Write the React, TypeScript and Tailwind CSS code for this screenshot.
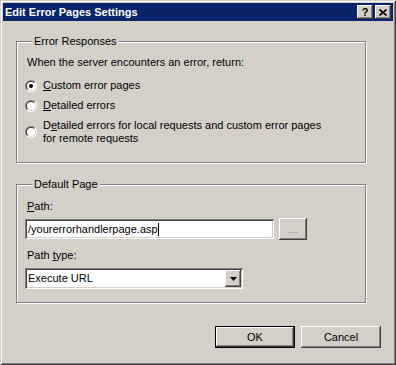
import React from 'react';

const raised =
  'shadow-[inset_-1px_-1px_0_#404040,inset_1px_1px_0_#ffffff,inset_-2px_-2px_0_#808080,inset_2px_2px_0_#d4d0c8]';
const sunken =
  'shadow-[inset_1px_1px_0_#808080,inset_-1px_-1px_0_#ffffff,inset_2px_2px_0_#404040,inset_-2px_-2px_0_#d4d0c8]';
const etched = 'border border-[#808080] shadow-[inset_1px_1px_0_#ffffff,1px_1px_0_#ffffff]';

function Radio({ checked }: { checked?: boolean }) {
  // classic sunken radio: gray/dark top-left, white/light bottom-right
  const half = (r: number) => {
    const d = r * Math.SQRT1_2;
    return `M${6 - d},${6 + d} A${r},${r} 0 0 1 ${6 + d},${6 - d} Z`;
  };
  const other = (r: number) => {
    const d = r * Math.SQRT1_2;
    return `M${6 - d},${6 + d} A${r},${r} 0 0 0 ${6 + d},${6 - d} Z`;
  };
  return (
    <svg width="12" height="12" viewBox="0 0 12 12" className="shrink-0">
      <path d={half(6)} fill="#808080" />
      <path d={other(6)} fill="#ffffff" />
      <path d={half(5)} fill="#404040" />
      <path d={other(5)} fill="#d4d0c8" />
      <circle cx="6" cy="6" r="4" fill="#ffffff" />
      {checked && <circle cx="6" cy="6" r="2" fill="#000000" />}
    </svg>
  );
}

function GroupBox({ title, children, className }: { title: string; children: React.ReactNode; className?: string }) {
  return (
    <fieldset className={`${etched} w-[350px] ml-[13px] pl-[8px] ${className ?? ''}`}>
      <legend className="ml-[7px] px-[2px] leading-[13px] bg-[#d4d0c8]">{title}</legend>
      {children}
    </fieldset>
  );
}

function Button({ label, primary }: { label: string; primary?: boolean }) {
  return (
    <div className={`w-[80px] h-[22px] ${primary ? 'border border-black' : ''}`}>
      <div className={`w-full h-full flex items-center justify-center ${raised}`}>{label}</div>
    </div>
  );
}

export default function App() {
  return (
    <div className="w-[396px] h-[365px] bg-[#d4d0c8] p-[3px] flex flex-col text-[11px] leading-[13px] text-black font-['Liberation_Sans',Arial,sans-serif] shadow-[inset_1px_1px_0_#d4d0c8,inset_-1px_-1px_0_#404040,inset_2px_2px_0_#ffffff,inset_-2px_-2px_0_#808080]">
      {/* Title bar */}
      <div className="h-[18px] bg-[#0a246a] flex items-center pl-[2px] pr-[2px]">
        <span className="text-white font-bold flex-1">Edit Error Pages Settings</span>
        <div
          className={`w-[16px] h-[14px] bg-[#d4d0c8] flex items-center justify-center font-bold text-[11px] leading-none text-black ${raised}`}
        >
          ?
        </div>
        <div className={`w-[16px] h-[14px] ml-[2px] bg-[#d4d0c8] flex items-center justify-center ${raised}`}>
          <svg width="8" height="7" viewBox="0 0 8 7">
            <path d="M0.5 0.5 L7.5 6.5 M7.5 0.5 L0.5 6.5" stroke="#000" strokeWidth="1.6" />
          </svg>
        </div>
      </div>

      <GroupBox title="Error Responses" className="mt-[14px] pt-[8px] pb-[17px]">
        <div className="ml-[2px]">When the server encounters an error, return:</div>
        <div className="mt-[10px] flex items-center gap-[6px]">
          <Radio checked />
          <span>
            <u>C</u>ustom error pages
          </span>
        </div>
        <div className="mt-[7px] flex items-center gap-[6px]">
          <Radio />
          <span>
            <u>D</u>etailed errors
          </span>
        </div>
        <div className="mt-[7px] flex items-center gap-[6px]">
          <Radio />
          <span>
            D<u>e</u>tailed errors for local requests and custom error pages
            <br />
            for remote requests
          </span>
        </div>
      </GroupBox>

      <GroupBox title="Default Page" className="mt-[15px] pt-[9px] pb-[13px]">
        <div className="ml-[2px]">
          <u>P</u>ath:
        </div>
        <div className="mt-[5px] h-[22px] flex items-center">
          <div className={`w-[249px] h-[20px] bg-white flex items-center pl-[3px] ${sunken}`}>
            <span>/yourerrorhandlerpage.asp</span>
            <span className="w-px h-[13px] bg-black" />
          </div>
          <div className={`ml-[5px] w-[28px] h-[22px] flex items-center justify-center text-[#808080] ${raised}`}>
            ...
          </div>
        </div>
        <div className="mt-[9px] ml-[2px]">
          Path <u>t</u>ype:
        </div>
        <div className={`mt-[6px] w-[218px] h-[21px] bg-white flex items-center p-[2px] ${sunken}`}>
          <span className="flex-1 pl-[1px]">Execute URL</span>
          <div className={`w-[16px] h-[17px] bg-[#d4d0c8] flex items-center justify-center ${raised}`}>
            <svg width="7" height="4" viewBox="0 0 7 4">
              <polygon points="0,0 7,0 3.5,4" fill="#000" />
            </svg>
          </div>
        </div>
      </GroupBox>

      <div className="mt-[23px] flex justify-end gap-[6px] pr-[12px]">
        <Button label="OK" primary />
        <Button label="Cancel" />
      </div>
    </div>
  );
}
